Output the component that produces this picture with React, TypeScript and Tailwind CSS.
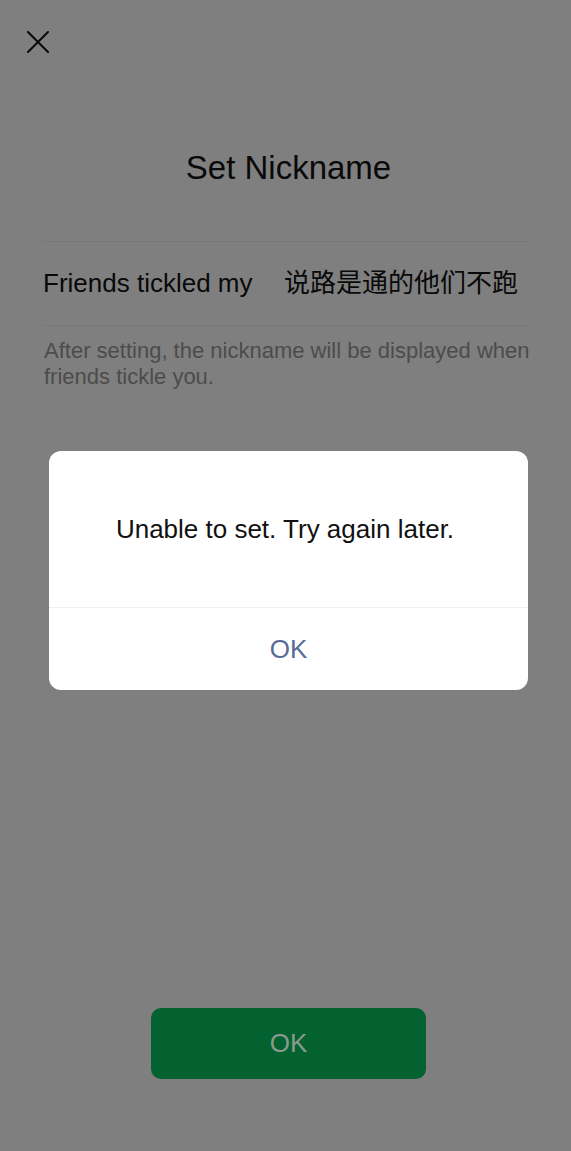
const font = "font-['Liberation_Sans','Noto_Sans_CJK_SC',sans-serif]";

// page is shown behind a 50% black mask, so its colours are the dimmed ones
export default function App() {
  return (
    <div className={`relative h-screen w-full overflow-hidden bg-[#7f7f7f] ${font}`}>
      <div className="flex h-full flex-col">
        <div className="pl-[27px] pt-[31px]">
          <svg width="22" height="22" viewBox="0 0 22 22" className="text-[#090909]">
            <path d="M1 1 L21 21 M21 1 L1 21" stroke="currentColor" strokeWidth="2" strokeLinecap="round" fill="none" />
          </svg>
        </div>

        <h1 className="mt-[95px] pl-[6px] text-center text-[33px] leading-[40px] text-[#090909]">Set Nickname</h1>

        <div className="ml-[43px] mr-[39px] mt-[53px]">
          <div className="h-px bg-[#787878]" />
          <div className="flex h-[83px] items-center text-[26px] text-[#090909]">
            <span className="w-[241px]">Friends tickled my</span>
            <span>说路是通的他们不跑</span>
          </div>
          <div className="h-px bg-[#787878]" />
          <p className="mt-[12px] pl-px text-[22px] leading-[26px] text-[#4c4c4c]">
            After setting, the nickname will be displayed when friends tickle you.
          </p>
        </div>

        <div className="mt-auto mb-[72px] flex justify-center pl-[6px]">
          <button className="h-[71px] w-[275px] rounded-[10px] bg-[#03622f] text-[26px] text-[#8a9a8e]">OK</button>
        </div>
      </div>

      {/* alert */}
      <div className="absolute inset-0 flex items-center justify-center pb-[10px] pl-[6px]">
        <div className="w-[479px] overflow-hidden rounded-[12px] bg-white">
          <div className="flex h-[156px] items-center justify-center pr-[7px] text-[26px] text-[#111]">
            Unable to set. Try again later.
          </div>
          <div className="h-px bg-[#f0f0f0]" />
          <div className="flex h-[82px] items-center justify-center text-[26px] text-[#576b95]">OK</div>
        </div>
      </div>
    </div>
  );
}
